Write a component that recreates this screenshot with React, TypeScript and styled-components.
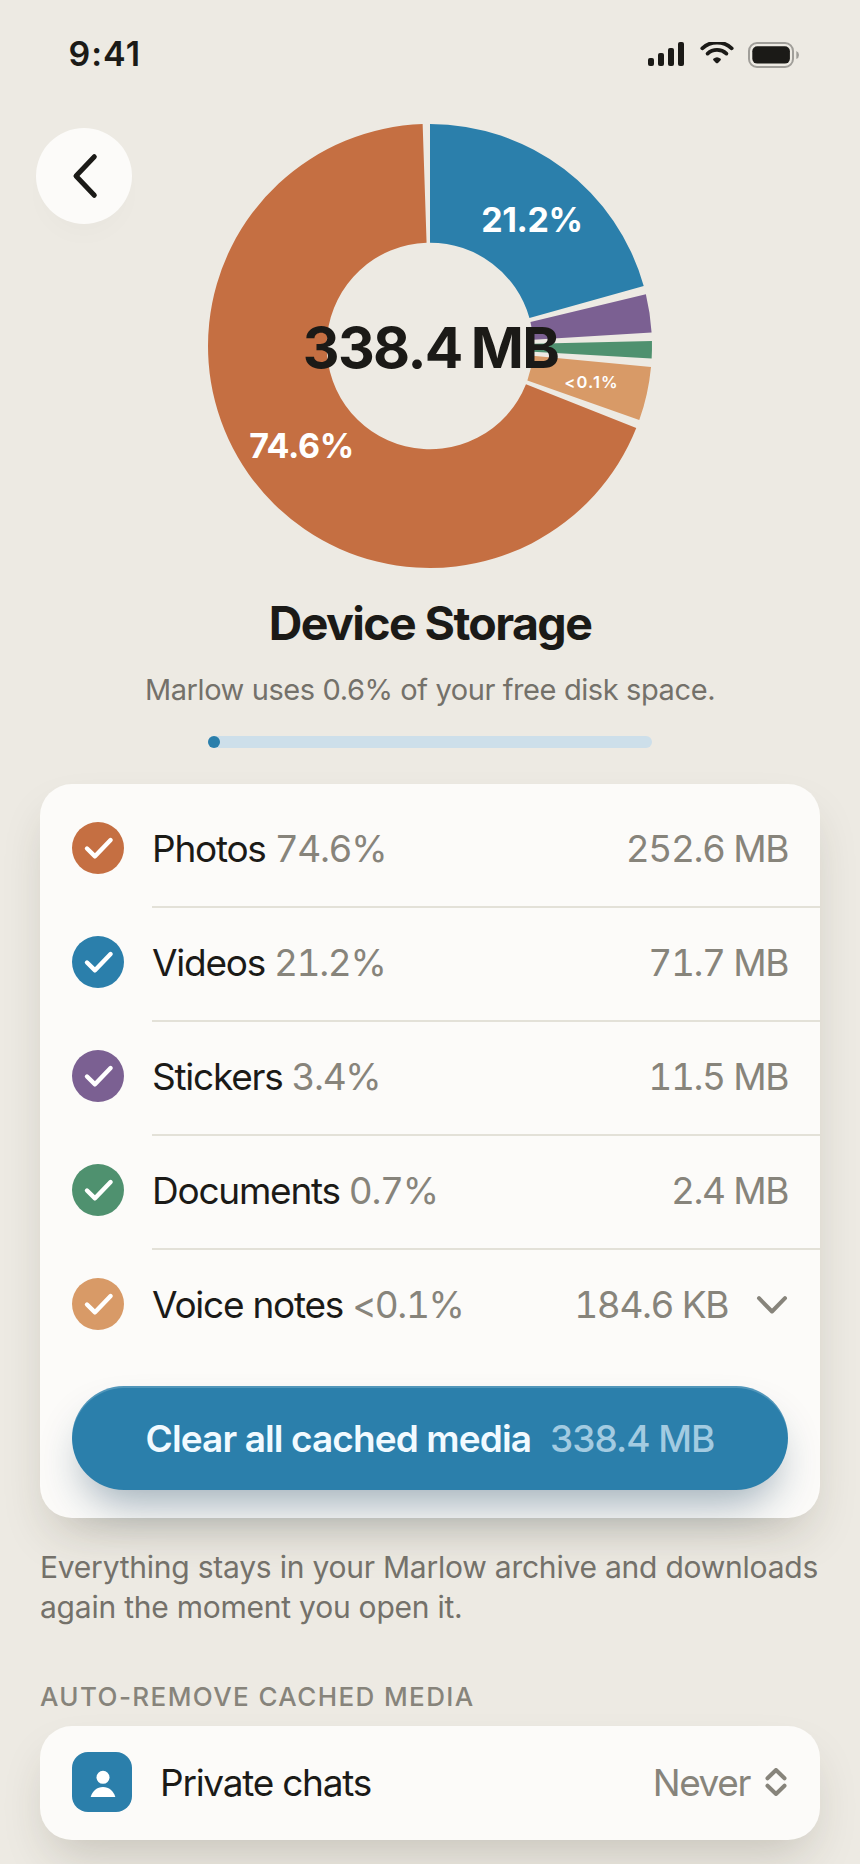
import React from "react";
import styled, { createGlobalStyle } from "styled-components";

const palette = {
  page: "#edeae3",
  card: "#fcfbf9",
  ink: "#1b1a17",
  muted: "#87847b",
  caption: "#74716a",
  line: "#e3e1d8",
  blue: "#2b7fab",
  orange: "#c56f42",
  purple: "#7b6092",
  green: "#4f916f",
  tan: "#d89a67",
};

const GlobalStyle = createGlobalStyle`
  *, *::before, *::after { box-sizing: border-box; }
  body {
    margin: 0;
    background: ${palette.page};
    color: ${palette.ink};
    font-family: Inter, "Liberation Sans", sans-serif;
  }
  button { font: inherit; border: 0; }
`;

const Screen = styled.main`
  width: 860px;
  height: 1864px;
  overflow: hidden;
  display: flex;
  flex-direction: column;
  background: ${palette.page};
  & > * { flex-shrink: 0; }
`;

const StatusBar = styled.header`
  display: flex;
  align-items: center;
  justify-content: space-between;
  height: 108px;
  padding: 0 60px 0 68.5px;
`;

const Clock = styled.span`
  font-size: 34px;
  font-weight: 600;
  line-height: 40px;
  letter-spacing: 1px;
`;

const StatusIcons = styled.svg`
  display: block;
  width: 152px;
  height: 26px;
  margin-top: 2px;
`;

const Hero = styled.section`
  display: grid;
  grid-template-columns: 1fr 444px 1fr;
  align-items: start;
  padding: 16px 36px 0;
`;

const BackButton = styled.button`
  display: grid;
  place-items: center;
  width: 96px;
  height: 96px;
  margin-top: 4px;
  padding: 0;
  border-radius: 50%;
  background: ${palette.card};
  box-shadow: 0 16px 32px -12px rgba(60, 55, 70, 0.03);
`;

const Donut = styled.svg`
  display: block;
  width: 444px;
  height: 444px;
  overflow: visible;
  font-family: Inter, "Liberation Sans", sans-serif;
`;

const SliceLabel = styled.text<{ $small?: boolean }>`
  fill: #fff;
  text-anchor: middle;
  font-size: ${(p) => (p.$small ? 16.5 : 34)}px;
  font-weight: ${(p) => (p.$small ? 600 : 700)};
  letter-spacing: ${(p) => (p.$small ? 1.1 : -0.4)}px;
`;

const TotalLabel = styled.text`
  fill: ${palette.ink};
  text-anchor: middle;
  font-size: 57px;
  font-weight: 700;
  letter-spacing: -1.6px;
  word-spacing: -3px;
`;

const Title = styled.h1`
  margin: 25px 0 0;
  text-align: center;
  font-size: 46.5px;
  font-weight: 700;
  line-height: 60px;
  letter-spacing: -1.6px;
`;

const Subtitle = styled.p`
  margin: 17px 0 0;
  text-align: center;
  font-size: 29px;
  line-height: 40px;
  letter-spacing: -0.4px;
  color: ${palette.caption};
`;

const Track = styled.div`
  width: 444px;
  height: 12px;
  margin: 26px auto 0;
  border-radius: 6px;
  background: #cddfea;
`;

const TrackFill = styled.div`
  width: 12px;
  height: 12px;
  border-radius: 6px;
  background: ${palette.blue};
`;

const Card = styled.section<{ $gap: number }>`
  margin: ${(p) => p.$gap}px 40px 0;
  border-radius: 32px;
  background: ${palette.card};
  box-shadow: 0 24px 48px -12px rgba(50, 45, 30, 0.21);
`;

const UsageList = styled.ul`
  margin: 0;
  padding: 10px 0 0;
  list-style: none;
`;

const UsageRow = styled.li`
  display: flex;
  height: 114px;
  padding-left: 32px;
  gap: 28px;
  &:last-child > div { border-color: transparent; }
`;

const CheckBadge = styled.span<{ $color: string }>`
  width: 52px;
  height: 52px;
  margin-top: 28px;
  border-radius: 50%;
  background: ${(p) => p.$color};
  svg { display: block; }
`;

const RowBody = styled.div`
  flex: 1;
  display: flex;
  align-items: center;
  padding: 0 32px 3px 0;
  border-bottom: 2px solid ${palette.line};
  font-size: 37px;
  line-height: 48px;
  white-space: pre;
`;

const RowName = styled.span`
  letter-spacing: -1.25px;
`;

const RowShare = styled.span`
  margin-left: 9px;
  color: ${palette.muted};
  font-variant-numeric: tabular-nums;
  letter-spacing: -1.35px;
`;

const RowSize = styled.span`
  margin-left: auto;
  color: ${palette.muted};
  font-variant-numeric: tabular-nums;
  letter-spacing: -1.4px;
`;

const ExpandIcon = styled.svg`
  display: block;
  margin-left: 28px;
`;

const ClearButton = styled.button`
  display: flex;
  align-items: center;
  justify-content: center;
  gap: 19px;
  width: 716px;
  height: 104px;
  margin: 22px 32px 28px;
  padding: 0;
  border-radius: 52px;
  background: ${palette.blue};
  color: #f1faff;
  font-size: 37px;
  font-weight: 600;
  letter-spacing: -0.9px;
  box-shadow: inset 0 2px 0 rgba(255, 255, 255, 0.18),
    0 24px 44px -12px rgba(20, 60, 90, 0.42);
`;

const ClearAmount = styled.span`
  color: #a3cbe1;
  font-weight: 500;
  letter-spacing: -1px;
`;

const Footnote = styled.p`
  margin: 29px 40px 0;
  font-size: 30px;
  line-height: 40px;
  letter-spacing: -0.23px;
  white-space: nowrap;
  color: ${palette.caption};
`;

const SectionLabel = styled.h2`
  margin: 54px 40px 0;
  font-size: 26px;
  font-weight: 500;
  line-height: 32px;
  letter-spacing: 1.4px;
  text-transform: uppercase;
  color: ${palette.muted};
`;

const SettingRow = styled.div`
  display: flex;
  align-items: center;
  height: 114px;
  padding: 0 32px 2px;
  font-size: 37px;
  line-height: 48px;
  letter-spacing: -1.25px;
`;

const SettingIcon = styled.span`
  width: 60px;
  height: 60px;
  margin-right: 28px;
  border-radius: 16px;
  background: ${palette.blue};
  svg { display: block; }
`;

const SettingName = styled.span`
  padding-top: 2px;
`;

const SettingValue = styled.span`
  margin-left: auto;
  margin-right: 14px;
  padding-top: 2px;
  letter-spacing: -1.4px;
  color: ${palette.muted};
`;

const OUTER = 222;
const INNER = 103.3;

const slices = [
  { color: palette.blue, from: 0, to: 74.3 },
  { color: palette.purple, from: 76.5, to: 86.5 },
  { color: palette.green, from: 88.7, to: 93.2 },
  { color: palette.tan, from: 95.4, to: 109.5 },
  { color: palette.orange, from: 111.7, to: 358.1 },
];

function slicePath(from: number, to: number) {
  const at = (r: number, deg: number) => {
    const a = (deg * Math.PI) / 180;
    return `${(OUTER + r * Math.sin(a)).toFixed(2)} ${(OUTER - r * Math.cos(a)).toFixed(2)}`;
  };
  const large = to - from > 180 ? 1 : 0;
  return [
    `M${at(OUTER, from)}`,
    `A${OUTER} ${OUTER} 0 ${large} 1 ${at(OUTER, to)}`,
    `L${at(INNER, to)}`,
    `A${INNER} ${INNER} 0 ${large} 0 ${at(INNER, from)}`,
    "Z",
  ].join(" ");
}

const usage = [
  { name: "Photos", share: "74.6%", size: "252.6 MB", color: palette.orange },
  { name: "Videos", share: "21.2%", size: "71.7 MB", color: palette.blue },
  { name: "Stickers", share: "3.4%", size: "11.5 MB", color: palette.purple },
  { name: "Documents", share: "0.7%", size: "2.4 MB", color: palette.green },
  { name: "Voice notes", share: "<0.1%", size: "184.6 KB", color: palette.tan, expandable: true },
];

export default function App() {
  return (
    <Screen>
      <GlobalStyle />
      <StatusBar>
        <Clock>9:41</Clock>
        <StatusIcons viewBox="0 0 152 26" fill={palette.ink}>
          <rect x="0" y="16" width="6" height="8" rx="2" />
          <rect x="10" y="11" width="6" height="13" rx="2" />
          <rect x="20" y="6" width="6" height="18" rx="2" />
          <rect x="30" y="0" width="6" height="24" rx="2" />
          <g fill="none" stroke={palette.ink} strokeWidth="3.8" strokeLinecap="round">
            <path d="M54.3 6.3a21.5 21.5 0 0 1 29.4 0" />
            <path d="M59.6 11.6a14 14 0 0 1 18.8 0" />
          </g>
          <path d="M65.3 16.8q3.7-3.2 7.4 0q.6 1-.3 1.8l-2.4 2.3q-1 .8-2 0l-2.4-2.3q-.9-.8-.3-1.8z" />
          <rect x="101" y="1" width="44" height="24" rx="8" fill="none" stroke="#a09e99" strokeWidth="2" />
          <rect x="104.3" y="4.2" width="37.6" height="17.4" rx="5" />
          <path d="M148.3 9q2.7 1 2.7 4t-2.7 4z" fill="#a09e99" />
        </StatusIcons>
      </StatusBar>

      <Hero>
        <BackButton aria-label="Back">
          <svg width="96" height="96" viewBox="0 0 96 96" fill="none">
            <path
              d="M58.3 28.7 40 48l18.3 19.3"
              stroke={palette.ink}
              strokeWidth="5"
              strokeLinecap="round"
              strokeLinejoin="round"
            />
          </svg>
        </BackButton>
        <Donut viewBox="0 0 444 444">
          {slices.map((s) => (
            <path key={s.color} d={slicePath(s.from, s.to)} fill={s.color} />
          ))}
          <SliceLabel x="324" y="107.7">21.2%</SliceLabel>
          <SliceLabel x="93.5" y="334">74.6%</SliceLabel>
          <SliceLabel x="383.5" y="264" $small>&lt;0.1%</SliceLabel>
          <TotalLabel x="222.5" y="244">338.4 MB</TotalLabel>
        </Donut>
      </Hero>

      <Title>Device Storage</Title>
      <Subtitle>Marlow uses 0.6% of your free disk space.</Subtitle>
      <Track>
        <TrackFill />
      </Track>

      <Card $gap={36}>
        <UsageList>
          {usage.map((u) => (
            <UsageRow key={u.name}>
              <CheckBadge $color={u.color}>
                <svg width="52" height="52" viewBox="0 0 52 52" fill="none">
                  <path
                    d="M15 26.5 23 34.3 38.6 18"
                    stroke="#fff"
                    strokeWidth="4.4"
                    strokeLinecap="round"
                    strokeLinejoin="round"
                  />
                </svg>
              </CheckBadge>
              <RowBody>
                <RowName>{u.name}</RowName>
                <RowShare>{u.share}</RowShare>
                <RowSize>{u.size}</RowSize>
                {u.expandable && (
                  <ExpandIcon width="32" height="18" viewBox="0 0 32 18" fill="none">
                    <path
                      d="M3 2.2 16 15.5 29 2.2"
                      stroke={palette.muted}
                      strokeWidth="4"
                      strokeLinecap="round"
                      strokeLinejoin="round"
                    />
                  </ExpandIcon>
                )}
              </RowBody>
            </UsageRow>
          ))}
        </UsageList>
        <ClearButton>
          <span>Clear all cached media</span>
          <ClearAmount>338.4 MB</ClearAmount>
        </ClearButton>
      </Card>

      <Footnote>
        Everything stays in your Marlow archive and downloads
        <br />
        again the moment you open it.
      </Footnote>

      <SectionLabel>Auto-remove cached media</SectionLabel>
      <Card $gap={13}>
        <SettingRow>
          <SettingIcon>
            <svg width="60" height="60" viewBox="0 0 60 60" fill="#fff">
              <circle cx="31" cy="25.3" r="6.5" />
              <path d="M18.7 45c1.6-6 6.4-10 12.3-10s10.7 4 12.3 10z" />
            </svg>
          </SettingIcon>
          <SettingName>Private chats</SettingName>
          <SettingValue>Never</SettingValue>
          <svg width="24" height="28" viewBox="0 0 24 28" fill="none">
            <path
              d="M3.5 10.3 12 2l8.5 8.3M3.5 17.7 12 26l8.5-8.3"
              stroke={palette.muted}
              strokeWidth="4"
              strokeLinecap="round"
              strokeLinejoin="round"
            />
          </svg>
        </SettingRow>
      </Card>
    </Screen>
  );
}
